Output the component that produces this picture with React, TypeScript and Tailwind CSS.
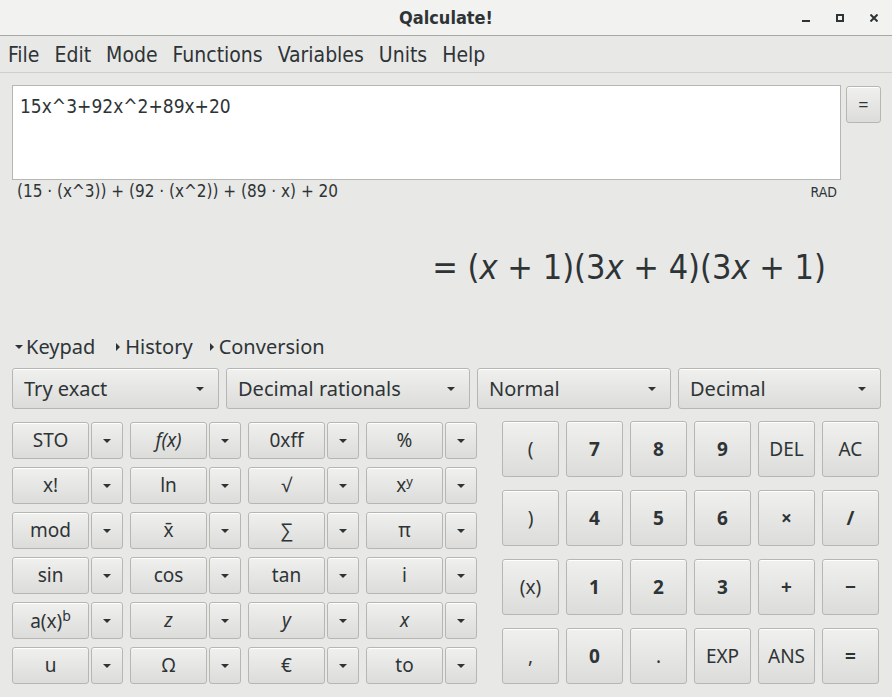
import React from "react"

const ink = "text-[#2e3436]"
const narrow = '"Liberation Sans Narrow", "DejaVu Sans Condensed", "Noto Sans", sans-serif'

function Caret({ dir = "down" }: { dir?: "down" | "right" }) {
  if (dir === "right") {
    return (
      <span className="inline-block w-0 h-0 border-y-[4px] border-y-transparent border-l-[4px] border-l-[#2e3436]" />
    )
  }
  return (
    <span className="inline-block w-0 h-0 border-x-[4px] border-x-transparent border-t-[4px] border-t-[#2e3436]" />
  )
}

const btn =
  "flex items-center rounded-[3px] border border-[#b6b6b3] bg-gradient-to-b from-[#f0f0ee] to-[#dcdcda] shadow-[inset_0_1px_0_#ffffff]"

function Combo({ label, width }: { label: string; width: string }) {
  return (
    <div className={`${btn} ${width} h-[41px] justify-between pl-[11px] pr-[14px]`}>
      <span className={`text-[20px] ${ink}`}>{label}</span>
      <Caret />
    </div>
  )
}

type Key = { label: React.ReactNode; className?: string }

const leftKeys: Key[][] = [
  [
    { label: "STO" },
    { label: "f(x)", className: "italic" },
    { label: "0xff" },
    { label: "%" },
  ],
  [
    { label: "x!" },
    { label: "ln" },
    { label: "√" },
    {
      label: (
        <span>
          x<span className="text-[13px] align-[6px]">y</span>
        </span>
      ),
    },
  ],
  [
    { label: "mod" },
    { label: "x̄" },
    { label: "∑" },
    { label: "π" },
  ],
  [
    { label: "sin" },
    { label: "cos" },
    { label: "tan" },
    { label: "i" },
  ],
  [
    {
      label: (
        <span>
          a(x)<span className="text-[14px] align-[7px]">b</span>
        </span>
      ),
    },
    { label: "z", className: "italic" },
    { label: "y", className: "italic" },
    { label: "x", className: "italic" },
  ],
  [
    { label: "u" },
    { label: "Ω" },
    { label: "€" },
    { label: "to" },
  ],
]

const rightKeys: Key[][] = [
  [
    { label: "(" },
    { label: "7", className: "font-bold" },
    { label: "8", className: "font-bold" },
    { label: "9", className: "font-bold" },
    { label: "DEL" },
    { label: "AC" },
  ],
  [
    { label: ")" },
    { label: "4", className: "font-bold" },
    { label: "5", className: "font-bold" },
    { label: "6", className: "font-bold" },
    { label: "×", className: "font-bold" },
    { label: "/", className: "font-bold" },
  ],
  [
    { label: "(x)" },
    { label: "1", className: "font-bold" },
    { label: "2", className: "font-bold" },
    { label: "3", className: "font-bold" },
    { label: "+", className: "font-bold" },
    { label: "−", className: "font-bold" },
  ],
  [
    { label: "," },
    { label: "0", className: "font-bold" },
    { label: "." },
    { label: "EXP" },
    { label: "ANS" },
    { label: "=", className: "font-bold" },
  ],
]

const menu = ["File", "Edit", "Mode", "Functions", "Variables", "Units", "Help"]

export default function App() {
  return (
    <div
      className={`w-[892px] h-[697px] overflow-hidden bg-[#e8e8e7] ${ink} flex flex-col`}
      style={{ fontFamily: '"Noto Sans", "Open Sans", sans-serif' }}
    >
      {/* title bar */}
      <div className="h-[36px] shrink-0 bg-[#f2f2f1] border-b border-[#a8a8a6] relative flex items-center justify-center">
        <span className="text-[18px] font-bold" style={{ fontFamily: narrow }}>
          Qalculate!
        </span>
        <div className="absolute right-[14px] top-0 h-full flex items-center gap-[26px]">
          <span className="w-[8px] h-[2px] bg-[#2e3436] mt-[6px]" />
          <span className="w-[8px] h-[8px] border-2 border-[#2e3436]" />
          <svg width="8" height="8" viewBox="0 0 8 8">
            <path d="M0.5 0.5L7.5 7.5M7.5 0.5L0.5 7.5" stroke="#2e3436" strokeWidth="2" />
          </svg>
        </div>
      </div>

      {/* menu bar */}
      <div
        className="h-[37px] shrink-0 border-b border-[#cfcfcd] flex items-center pl-[8px] pt-[4px] gap-[15px] text-[21px]"
        style={{ fontFamily: narrow }}
      >
        {menu.map((m) => (
          <span key={m}>{m}</span>
        ))}
      </div>

      {/* entry */}
      <div className="flex mt-[12px] ml-[12px] shrink-0">
        <div
          className="w-[829px] h-[95px] bg-white border border-[#b6b6b3] px-[7px] pt-[6px] text-[19px]"
          style={{ fontFamily: narrow }}
        >
          15x^3+92x^2+89x+20
        </div>
        <div className={`${btn} justify-center ml-[5px] mt-[1px] w-[35px] h-[37px] text-[18px]`}>=</div>
      </div>

      {/* parsed */}
      <div
        className="h-[24px] shrink-0 flex items-center justify-between pl-[17px] pr-[55px] text-[17px]"
        style={{ fontFamily: narrow }}
      >
        <span>(15 · (x^3)) + (92 · (x^2)) + (89 · x) + 20</span>
        <span className="text-[14px]">RAD</span>
      </div>

      {/* result */}
      <div
        className="h-[126px] shrink-0 flex items-center justify-end pr-[66px] text-[34px]"
        style={{ fontFamily: narrow }}
      >
        <span>
          = (<i>x</i> + 1)(3<i>x</i> + 4)(3<i>x</i> + 1)
        </span>
      </div>

      {/* expanders */}
      <div className="h-[34px] shrink-0 flex items-center pl-[15px] text-[20px]">
        <span className="flex items-center gap-[3px]">
          <Caret />
          Keypad
        </span>
        <span className="flex items-center gap-[5px] ml-[21px]">
          <Caret dir="right" />
          History
        </span>
        <span className="flex items-center gap-[5px] ml-[17px]">
          <Caret dir="right" />
          Conversion
        </span>
      </div>

      {/* combos */}
      <div className="flex mt-[4px] ml-[12px] gap-[7px] shrink-0">
        <Combo label="Try exact" width="w-[207px]" />
        <Combo label="Decimal rationals" width="w-[244px]" />
        <Combo label="Normal" width="w-[194px]" />
        <Combo label="Decimal" width="w-[203px]" />
      </div>

      {/* keypad */}
      <div className="flex mt-[12px] ml-[12px] shrink-0">
        <div className="flex flex-col gap-[8px] mt-[1px]">
          {leftKeys.map((row, i) => (
            <div key={i} className="flex gap-[7px]">
              {row.map((k, j) => (
                <div key={j} className="flex gap-[2px]">
                  <div className={`${btn} justify-center w-[77px] h-[37px] text-[19px] ${k.className ?? ""}`}>
                    {k.label}
                  </div>
                  <div className={`${btn} justify-center w-[32px] h-[37px]`}>
                    <Caret />
                  </div>
                </div>
              ))}
            </div>
          ))}
        </div>
        <div className="flex flex-col gap-[13px] ml-[25px]">
          {rightKeys.map((row, i) => (
            <div key={i} className="flex gap-[7px]">
              {row.map((k, j) => (
                <div key={j} className={`${btn} justify-center w-[57px] h-[56px] text-[19px] ${k.className ?? ""}`}>
                  {k.label}
                </div>
              ))}
            </div>
          ))}
        </div>
      </div>
    </div>
  )
}
